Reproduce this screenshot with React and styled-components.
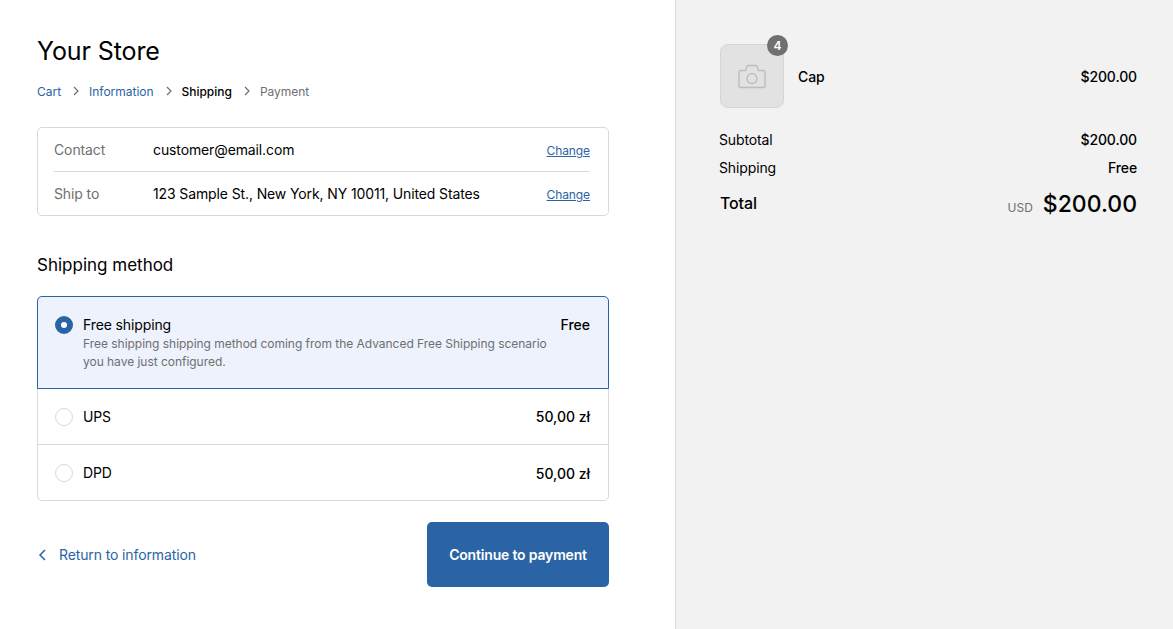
import React from 'react'
import styled, { createGlobalStyle, css } from 'styled-components'

const GlobalStyle = createGlobalStyle`
  html, body {
    margin: 0;
    padding: 0;
    background: #fff;
  }
  body {
    font-family: Inter, "Liberation Sans", sans-serif;
    color: #000;
    font-size: 14px;
    letter-spacing: -0.12px;
  }
  * {
    box-sizing: border-box;
  }
`

const Page = styled.div`
  display: grid;
  grid-template-columns: 675px 1fr;
  height: 629px;
  overflow: hidden;
`

const Main = styled.main`
  padding: 33px 66px 0 37px;
`

const Side = styled.aside`
  background: #f2f2f2;
  border-left: 1px solid #d9d9d9;
  padding: 44px 36px 0 43px;
`

const StoreName = styled.h1`
  margin: 0;
  font-size: 25px;
  line-height: 36px;
  font-weight: 400;
  letter-spacing: -0.1px;
`

const Crumbs = styled.nav`
  display: flex;
  align-items: center;
  margin-top: 14px;
  height: 16px;
  font-size: 12px;
  letter-spacing: -0.02px;
`

const Crumb = styled.span`
  color: ${(p) => (p.$state === 'link' ? '#2a64a5' : p.$state === 'current' ? '#000' : '#6f6f6f')};
  font-weight: ${(p) => (p.$state === 'current' ? 500 : 400)};
`

const CrumbArrow = styled.svg`
  width: 8px;
  height: 10px;
  margin: 0 10px;
  fill: none;
  stroke: #6f6f6f;
  stroke-width: 1.2;
`

const ReviewBox = styled.section`
  margin-top: 28px;
  border: 1px solid #d9d9d9;
  border-radius: 5px;
  padding: 0 18px 0 16px;
`

const ReviewRow = styled.div`
  display: flex;
  align-items: center;
  height: 43px;
  & + & {
    height: 44px;
    border-top: 1px solid #d9d9d9;
  }
`

const ReviewLabel = styled.span`
  width: 99px;
  color: #6f6f6f;
`

const ReviewValue = styled.span`
  flex: 1;
`

const ChangeLink = styled.a`
  margin-top: 2px;
  font-size: 12px;
  letter-spacing: -0.1px;
  color: #2a64a5;
  text-decoration: underline;
`

const SectionTitle = styled.h2`
  margin: 37px 0 0;
  font-size: 17px;
  line-height: 24px;
  font-weight: 400;
  letter-spacing: 0;
`

const Methods = styled.section`
  margin-top: 19px;
  border: 1px solid #d9d9d9;
  border-radius: 5px;
`

const Method = styled.div`
  display: flex;
  align-items: center;
  height: 56px;
  padding: 1px 18px 0 17px;
  ${(p) =>
    p.$divider &&
    css`
      border-top: 1px solid #d9d9d9;
    `}
  ${(p) =>
    p.$selected &&
    css`
      align-items: flex-start;
      height: 93px;
      margin: -1px;
      padding: 19px 18px 17px 17px;
      background: #edf2fc;
      border: 1px solid #2a64a5;
      border-radius: 5px 5px 0 0;
    `}
`

const Radio = styled.span`
  flex: none;
  width: 18px;
  height: 18px;
  margin-right: 10px;
  border-radius: 50%;
  background: #fff;
  border: ${(p) => (p.$on ? '6px solid #2a64a5' : '1px solid #d9d9d9')};
`

const MethodBody = styled.div`
  flex: 1;
  line-height: 18px;
`

const MethodNote = styled.div`
  width: 470px;
  margin-top: 1px;
  font-size: 12px;
  letter-spacing: -0.03px;
  color: #6f6f6f;
  line-height: 18px;
`

const Price = styled.span`
  font-weight: 500;
  letter-spacing: -0.02px;
  white-space: nowrap;
`

const Actions = styled.div`
  display: flex;
  align-items: center;
  justify-content: space-between;
  margin-top: 21px;
`

const BackLink = styled.a`
  display: flex;
  align-items: center;
  gap: 13px;
  color: #2a64a5;
  text-decoration: none;
`

const BackArrow = styled.svg`
  width: 9px;
  height: 12px;
  fill: none;
  stroke: #2a64a5;
  stroke-width: 1.5;
`

const ContinueButton = styled.button`
  width: 182px;
  height: 65px;
  border: 0;
  border-radius: 5px;
  background: #2a64a5;
  color: #fff;
  font: 600 14px Inter, "Liberation Sans", sans-serif;
  letter-spacing: -0.18px;
`

const Item = styled.div`
  display: flex;
  align-items: center;
  padding-left: 1px;
`

const Thumb = styled.div`
  position: relative;
  display: flex;
  align-items: center;
  justify-content: center;
  width: 64px;
  height: 64px;
  background: #e2e2e2;
  border: 1px solid #d5d5d5;
  border-radius: 8px;
`

const Badge = styled.span`
  position: absolute;
  top: -10px;
  right: -5px;
  display: flex;
  align-items: center;
  justify-content: center;
  width: 21px;
  height: 21px;
  border-radius: 50%;
  background: #707070;
  color: #fff;
  font-size: 12px;
  font-weight: 600;
`

const CameraIcon = styled.svg`
  width: 28px;
  height: 25px;
  fill: none;
  stroke: #bdbdbd;
  stroke-width: 1.4;
`

const ItemName = styled.span`
  flex: 1;
  margin-left: 14px;
  font-weight: 500;
`

const Totals = styled.div`
  margin-top: 18px;
`

const TotalRow = styled.div`
  display: flex;
  justify-content: space-between;
  align-items: center;
  height: 28px;
  &:first-child {
    margin-top: -1px;
  }
`

const Amount = styled.span`
  font-weight: 500;
`

const GrandRow = styled.div`
  display: flex;
  justify-content: space-between;
  align-items: center;
  margin-top: 5px;
  height: 36px;
`

const GrandLabel = styled.span`
  margin-bottom: 2px;
  padding-left: 1px;
  font-size: 16px;
  font-weight: 500;
`

const GrandAmount = styled.span`
  display: flex;
  align-items: baseline;
  gap: 10px;
`

const Currency = styled.span`
  font-size: 12px;
  letter-spacing: 0;
  color: #6f6f6f;
`

const BigPrice = styled.span`
  font-size: 23px;
  font-weight: 500;
  letter-spacing: 0;
`

const Arrow = () => (
  <CrumbArrow viewBox="0 0 8 10">
    <path d="M3 1l4 4-4 4" />
  </CrumbArrow>
)

const reviewRows = [
  { label: 'Contact', value: 'customer@email.com' },
  { label: 'Ship to', value: '123 Sample St., New York, NY 10011, United States' },
]

const App = () => (
  <Page>
    <GlobalStyle />
    <Main>
      <StoreName>Your Store</StoreName>
      <Crumbs>
        <Crumb $state="link">Cart</Crumb>
        <Arrow />
        <Crumb $state="link">Information</Crumb>
        <Arrow />
        <Crumb $state="current">Shipping</Crumb>
        <Arrow />
        <Crumb>Payment</Crumb>
      </Crumbs>
      <ReviewBox>
        {reviewRows.map((row) => (
          <ReviewRow key={row.label}>
            <ReviewLabel>{row.label}</ReviewLabel>
            <ReviewValue>{row.value}</ReviewValue>
            <ChangeLink href="#">Change</ChangeLink>
          </ReviewRow>
        ))}
      </ReviewBox>
      <SectionTitle>Shipping method</SectionTitle>
      <Methods>
        <Method $selected>
          <Radio $on />
          <MethodBody>
            Free shipping
            <MethodNote>
              Free shipping shipping method coming from the Advanced Free Shipping scenario you
              have just configured.
            </MethodNote>
          </MethodBody>
          <Price>Free</Price>
        </Method>
        <Method>
          <Radio />
          <MethodBody>UPS</MethodBody>
          <Price>50,00 zł</Price>
        </Method>
        <Method $divider>
          <Radio />
          <MethodBody>DPD</MethodBody>
          <Price>50,00 zł</Price>
        </Method>
      </Methods>
      <Actions>
        <BackLink href="#">
          <BackArrow viewBox="0 0 9 12">
            <path d="M8 1L3 6l5 5" />
          </BackArrow>
          Return to information
        </BackLink>
        <ContinueButton>Continue to payment</ContinueButton>
      </Actions>
    </Main>
    <Side>
      <Item>
        <Thumb>
          <CameraIcon viewBox="0 0 28 25">
            <path d="M7.5 6.5l2-5h9l2 5h5c.8 0 1.5.7 1.5 1.5v14c0 .8-.7 1.5-1.5 1.5h-23c-.8 0-1.5-.7-1.5-1.5v-14c0-.8.7-1.5 1.5-1.5z" />
            <circle cx="14" cy="14.5" r="5" />
          </CameraIcon>
          <Badge>4</Badge>
        </Thumb>
        <ItemName>Cap</ItemName>
        <Amount>$200.00</Amount>
      </Item>
      <Totals>
        <TotalRow>
          <span>Subtotal</span>
          <Amount>$200.00</Amount>
        </TotalRow>
        <TotalRow>
          <span>Shipping</span>
          <Amount>Free</Amount>
        </TotalRow>
        <GrandRow>
          <GrandLabel>Total</GrandLabel>
          <GrandAmount>
            <Currency>USD</Currency>
            <BigPrice>$200.00</BigPrice>
          </GrandAmount>
        </GrandRow>
      </Totals>
    </Side>
  </Page>
)

export default App
